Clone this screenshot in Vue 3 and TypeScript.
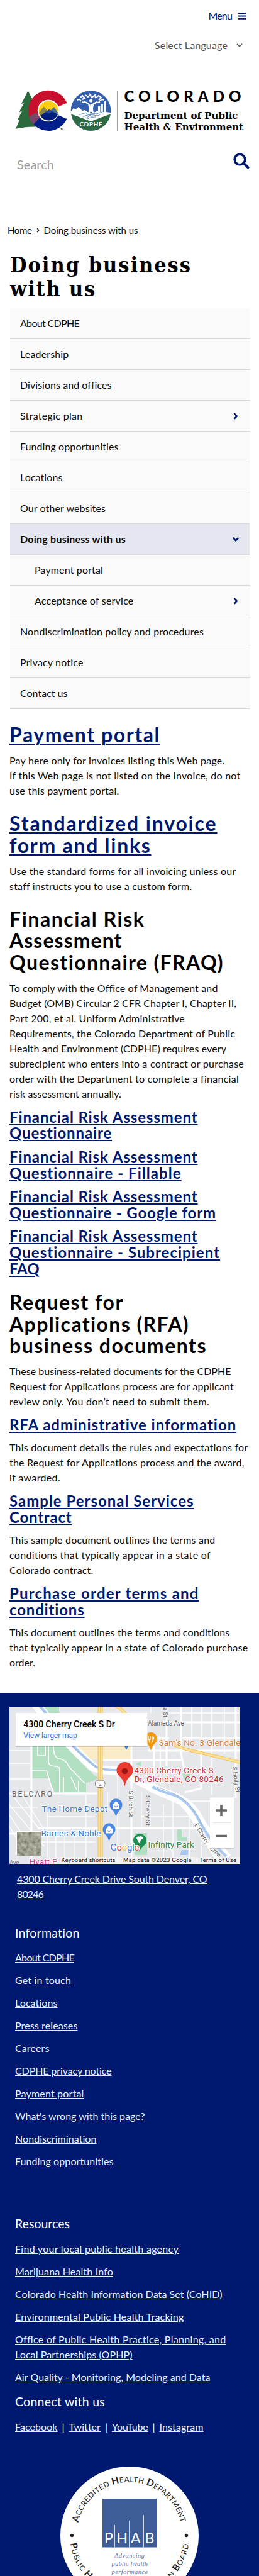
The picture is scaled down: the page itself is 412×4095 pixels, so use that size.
<script setup lang="ts">
import type { Directive } from 'vue'

interface Line {
  text: string
  width: number
}

interface NavItem extends Line {
  level?: 'child'
  active?: boolean
  arrow?: 'right' | 'down'
}

interface Block {
  kind: 'h2' | 'h3' | 'p'
  link?: boolean
  lines: Line[]
}

const line = (text: string, width: number): Line => ({ text, width })

/** Tracks a line of text so that it spans the given measure in pixels. */
const vFit: Directive<HTMLElement, number> = {
  mounted(el, { value }) {
    const count = (el.textContent ?? '').length
    if (!count) return
    const natural = el.getBoundingClientRect().width
    el.style.letterSpacing = `${((value - natural) / count).toFixed(3)}px`
  },
}

const navItems: NavItem[] = [
  { text: 'About CDPHE', width: 94 },
  { text: 'Leadership', width: 77.5 },
  { text: 'Divisions and offices', width: 145.5 },
  { text: 'Strategic plan', width: 99.5, arrow: 'right' },
  { text: 'Funding opportunities', width: 156.5 },
  { text: 'Locations', width: 67.5 },
  { text: 'Our other websites', width: 136 },
  { text: 'Doing business with us', width: 168, active: true, arrow: 'down' },
  { text: 'Payment portal', width: 109, level: 'child' },
  { text: 'Acceptance of service', width: 157.5, level: 'child', arrow: 'right' },
  { text: 'Nondiscrimination policy and procedures', width: 292 },
  { text: 'Privacy notice', width: 100.5 },
  { text: 'Contact us', width: 75.5 },
]

const blocks: Block[] = [
  { kind: 'h2', link: true, lines: [line('Payment portal', 240)] },
  {
    kind: 'p',
    lines: [
      line('Pay here only for invoices listing this Web page.', 342.5),
      line('If this Web page is not listed on the invoice, do not', 367.5),
      line('use this payment portal.', 174.5),
    ],
  },
  { kind: 'h2', link: true, lines: [line('Standardized invoice', 330.5), line('form and links', 225.5)] },
  {
    kind: 'p',
    lines: [
      line('Use the standard forms for all invoicing unless our', 360.5),
      line('staff instructs you to use a custom form.', 290.5),
    ],
  },
  {
    kind: 'h2',
    lines: [line('Financial Risk', 215.5), line('Assessment', 179.5), line('Questionnaire (FRAQ)', 341.5)],
  },
  {
    kind: 'p',
    lines: [
      line('To comply with the Office of Management and', 331.5),
      line('Budget (OMB) Circular 2 CFR Chapter I, Chapter II,', 361),
      line('Part 200, et al. Uniform Administrative', 279),
      line('Requirements, the Colorado Department of Public', 359),
      line('Health and Environment (CDPHE) requires every', 345),
      line('subrecipient who enters into a contract or purchase', 373),
      line('order with the Department to complete a financial', 365),
      line('risk assessment annually.', 178),
    ],
  },
  { kind: 'h3', link: true, lines: [line('Financial Risk Assessment', 299.5), line('Questionnaire', 163.5)] },
  { kind: 'h3', link: true, lines: [line('Financial Risk Assessment', 299.5), line('Questionnaire - Fillable', 274)] },
  { kind: 'h3', link: true, lines: [line('Financial Risk Assessment', 299.5), line('Questionnaire - Google form', 329.5)] },
  {
    kind: 'h3',
    link: true,
    lines: [line('Financial Risk Assessment', 299.5), line('Questionnaire - Subrecipient', 335.5), line('FAQ', 47.5)],
  },
  {
    kind: 'h2',
    lines: [line('Request for', 182), line('Applications (RFA)', 286.5), line('business documents', 314)],
  },
  {
    kind: 'p',
    lines: [
      line('These business-related documents for the CDPHE', 352.5),
      line('Request for Applications process are for applicant', 357),
      line('review only. You don’t need to submit them.', 318),
    ],
  },
  { kind: 'h3', link: true, lines: [line('RFA administrative information', 362)] },
  {
    kind: 'p',
    lines: [
      line('This document details the rules and expectations for', 379.5),
      line('the Request for Applications process and the award,', 373.5),
      line('if awarded.', 81),
    ],
  },
  { kind: 'h3', link: true, lines: [line('Sample Personal Services', 293.5), line('Contract', 99.5)] },
  {
    kind: 'p',
    lines: [
      line('This sample document outlines the terms and', 327.5),
      line('conditions that typically appear in a state of', 320),
      line('Colorado contract.', 133.5),
    ],
  },
  { kind: 'h3', link: true, lines: [line('Purchase order terms and', 301.5), line('conditions', 120)] },
  {
    kind: 'p',
    lines: [
      line('This document outlines the terms and conditions', 350.5),
      line('that typically appear in a state of Colorado purchase', 379.5),
      line('order.', 41),
    ],
  },
]

const address: Line[] = [line('4300 Cherry Creek Drive South Denver, CO', 302.5), line('80246', 42)]

const information: Line[][] = [
  [line('About CDPHE', 94)],
  [line('Get in touch', 89)],
  [line('Locations', 67.5)],
  [line('Press releases', 99.5)],
  [line('Careers', 54.5)],
  [line('CDPHE privacy notice', 153.5)],
  [line('Payment portal', 109.5)],
  [line("What's wrong with this page?", 206.5)],
  [line('Nondiscrimination', 129.5)],
  [line('Funding opportunities', 156.5)],
]

const resources: Line[][] = [
  [line('Find your local public health agency', 260)],
  [line('Marijuana Health Info', 156)],
  [line('Colorado Health Information Data Set (CoHID)', 329.5)],
  [line('Environmental Public Health Tracking', 268.5)],
  [line('Office of Public Health Practice, Planning, and', 335.5), line('Local Partnerships (OPHP)', 186.5)],
  [line('Air Quality - Monitoring, Modeling and Data', 310.5)],
]

const social: Line[] = [line('Facebook', 67.5), line('Twitter', 50.5), line('YouTube', 57.5), line('Instagram', 70)]
</script>

<template>
  <div class="page">
    <header class="header">
      <a class="menu-toggle">
        <span v-fit="37.5" class="line">Menu</span>
        <svg width="12" height="11" viewBox="0 0 12 11"><path d="M0 1.2h12M0 5.5h12M0 9.8h12" stroke="#001970" stroke-width="1.9" /></svg>
      </a>
      <div class="language">
        <span v-fit="116" class="line">Select Language</span>
        <svg width="10" height="6" viewBox="0 0 10 6"><path d="M1 .8l4 4 4-4" fill="none" stroke="#555" stroke-width="1.6" /></svg>
      </div>

      <svg class="logo" width="364" height="66" viewBox="25 143 364 66">
        <path d="M44.500 144.300L51.500 157.500L49.500 157.500L56 170L54 170L60 201.500Q42 201 25 204.800L31 191L27.800 190.500L35 177L30.500 178L38 164L34 165Z" fill="#2a6a3c" />
        <circle cx="77" cy="176" r="24.5" fill="#fff" />
        <path d="M99.600 166.600A24.500 24.500 0 1 0 56.900 190" fill="none" stroke="#c8102e" stroke-width="15" />
        <path d="M99.400 186A24.500 24.500 0 0 1 56.900 190" fill="none" stroke="#001f8a" stroke-width="15" />
        <path d="M46.500 185.500L57 179L63.500 187L53 198Q48 192 46.500 185.500Z" fill="#7a4668" />
        <circle cx="77" cy="176" r="17.200" fill="#fff" />
        <circle cx="77" cy="176" r="15.500" fill="#ffcd11" />
        <path d="M62 179L69.500 169.500L73 173L78 180L70 189Q63 186 62 179Z" fill="#8a8647" />
        <path d="M92 179L86 170L83 173L78 178L86 186Q92 184 92 179Z" fill="#48728e" />
        <path d="M64.500 184L78 174L92 182A15.500 15.500 0 0 1 64.500 184Z" fill="#001f7c" />
        <path d="M69.500 181L78 174.500L87 180L82 178L78 181L74 179Z" fill="#24499e" />
        <text x="96" y="206.500" font-size="4" textLength="5" class="ui">TM</text>

        <defs><clipPath id="seal"><circle cx="144.500" cy="176" r="31.800" /></clipPath></defs>
        <g clip-path="url(#seal)">
          <path d="M112 143h65v66h-65z" fill="#345fac" />
          <path d="M112 178l5-6 3 2 5-4 6 6 4-1 6 4h8l7-3v-7h5v-3h4v-4l4-2v18l7 1v6l-31 14-33-14z" fill="#fff" />
          <path d="M160 167v11M164.500 164v14M169 160v18" stroke="#345fac" stroke-width="1.300" />
          <path d="M112 181l32.500 11 32.500-11v28h-65z" fill="#2b6a42" />
          <path d="M112 179.500l32.500 12.500 32.500-12.500" fill="none" stroke="#fff" stroke-width="1.700" />
          <path d="M126 183q9-5 19-3t18-2M132 186q8-5 17-3t10-1M139 189q6-4 13-3M136 179l14 9M150 179l-13 9" fill="none" stroke="#5a8cd0" stroke-width="1" />
        </g>
        <path d="M141.500 180Q143.500 173 141.500 166Q139 163 134 162M148 180Q145.500 173 148 166Q151 163 155 162M144.700 178V166" fill="none" stroke="#fff" stroke-width="2.600" />
        <circle cx="144.700" cy="160" r="2.600" fill="#fff" />
        <path d="M122 159l5-1 2 3M128 155l3-3 4 4-4 2M136 151l4 3 3-3 3 4 5-4 1 5M153 155l4-3 4 3-4 4M158 161l4-3 4 1M130 162l4 1M155 163l4-1M142 149l3 3" fill="none" stroke="#fff" stroke-width="2" />
        <text x="126.500" y="201" font-size="10.200" font-weight="700" fill="#fff" textLength="36" class="ui">CDPHE</text>

        <path d="M186.800 144v64" stroke="#777" />
        <text x="197.500" y="162" font-size="24" font-weight="900" textLength="186" class="ui">COLORADO</text>
        <text x="197.500" y="189" font-size="15.500" font-weight="700" textLength="181" lengthAdjust="spacingAndGlyphs" class="slab">Department of Public</text>
        <text x="197.500" y="207" font-size="15.500" font-weight="700" textLength="189.500" lengthAdjust="spacingAndGlyphs" class="slab">Health &amp; Environment</text>
      </svg>

      <div class="search">
        <span v-fit="59" class="line">Search</span>
        <svg width="26" height="26" viewBox="0 0 26 26">
          <circle cx="10.500" cy="10.500" r="8.300" fill="none" stroke="#001970" stroke-width="3.600" />
          <path d="M16.500 16.500l7 6.800" stroke="#001970" stroke-width="4" stroke-linecap="round" />
        </svg>
      </div>
    </header>

    <nav class="crumbs">
      <a v-fit="38.5" class="line">Home</a>
      <svg width="5" height="8" viewBox="0 0 5 8"><path d="M1 1l2.800 3L1 7" fill="none" stroke="#222" stroke-width="1.300" /></svg>
      <span v-fit="150" class="line">Doing business with us</span>
    </nav>

    <h1 class="title">
      <span v-fit="289" class="line">Doing business</span>
      <span v-fit="137" class="line">with us</span>
    </h1>

    <ul class="side-nav">
      <li v-for="item in navItems" :key="item.text" :class="[item.level, { active: item.active }]">
        <span v-fit="item.width" class="line">{{ item.text }}</span>
        <svg v-if="item.arrow" :class="item.arrow" width="8" height="11" viewBox="0 0 8 11">
          <path d="M1.500 1.200l4.200 4.300-4.200 4.300" fill="none" stroke="#001970" stroke-width="2.500" />
        </svg>
      </li>
    </ul>

    <main class="content">
      <component :is="block.kind" v-for="(block, i) in blocks" :key="i" :class="{ link: block.link }">
        <span v-for="row in block.lines" :key="row.text" v-fit="row.width" class="line">{{ row.text }}</span>
      </component>
    </main>

    <footer class="footer">
      <svg class="map" width="367" height="250" viewBox="0 0 367 250">
        <defs>
          <filter id="aerial" x="0" y="0" width="1" height="1">
            <feTurbulence type="fractalNoise" baseFrequency=".16" numOctaves="3" seed="4" />
            <feColorMatrix values=".6 0 0 0 .05  .6 0 0 0 .05  .5 0 0 0 .03  0 0 0 0 1" />
          </filter>
        </defs>
        <path d="M0 0h367v250H0z" fill="#e6e7ea" />
        <path d="M100 55h94v29h-72z" fill="#fbecc8" />
        <path d="M57 0h22v10H57zM35 62h53l17 16 20 22 15 13-7 6-11 2v15H72L62 114H35zM199 201h20v35h-20zM267 195h7v12h8v6h-15z" fill="#b3dfc2" />
        <path d="M200 91l10-4v8zM275 106h12v14l-9-4z" fill="#b3dfc2" />
        <g fill="none" stroke="#fff">
          <path d="M45 62v16h12V62M62 62v26q0 6 12 7 5 0 6 5v36M70 62q0 20 10 21t15 13l25 26M98 112l9 20M35 102h24l10 33M86 112v24M110 118v17" stroke-width="1.700" />
          <path d="M0 138h140M147 85h128M220 25h147M0 202h55M45 193h275M35 62v188M194 62v188M230 62v65M250 0v95M273 0v75l6 30M360 0v145M305 70v60l-26 6M220 70h147M194 50h60" stroke-width="3" />
          <path d="M8 145l40 50M0 156l55 66M0 172l30 45M0 190l20 35M20 140l35 55M60 155v95M74 196v54M88 196v54M104 196v45M122 140v100M156 135v30M172 110v140M210 135v60M224 145v50M245 155v90M260 150v100M286 175v75M305 190v60M0 70h35M0 90h35M0 115h35M147 105h35M232 105h70M240 55v70M290 0v60M306 0v60M322 0v140M342 0v75M0 160h45M50 215h86M60 175h76M210 175h80M280 150h40M225 0v10M245 10h120M275 50h92" stroke-width="1.300" />
          <path d="M34-8Q62 25 92 60Q112 82 132 99Q146 104 171 105Q205 119 228 133L272 152Q292 170 307 205L331 240" stroke-width="8" />
          <path d="M47-5Q75 32 104 63Q123 83 136 94Q150 99 172 98M220 121Q238 131 260 138Q290 150 303 174Q326 215 350 238" stroke="#fff" stroke-width="7" />
          <path d="M46-5Q75 32 102 63Q122 84 138 96Q150 101 171 101M227 128Q242 135 263 141Q284 150 298 174Q318 213 345 238" stroke="#a9c8f1" stroke-width="4" />
          <path d="M45-3Q75 34 104 67L138 97M228 126Q264 136 283 152Q300 171 307 190" stroke="#8ca9bc" stroke-width=".7" />
        </g>
        <path d="M167-3q10 5 20 17M258 59q20 9 41 13l70 17" fill="none" stroke="#f3bf58" stroke-width="5" />
        <path d="M167-3q10 5 20 17M258 59q20 9 41 13l70 17" fill="none" stroke="#fde194" stroke-width="3.200" />
        <path d="M144.500 0v250" stroke="#f1bf5c" stroke-width="8" />
        <path d="M144.500 0v250" stroke="#fee095" stroke-width="6" />
        <path d="M144.500 0v250" stroke="#f5cb6c" />
        <path d="M274 228h10v8h-13z" fill="#a9c8f1" />
        <rect x="136.500" y="117" width="15.500" height="11.500" rx="5" fill="#fff" stroke="#777" />
        <g class="gmap">
          <text x="142" y="126" font-size="8" fill="#555">2</text>
          <text x="220" y="30.300" font-size="10.500" fill="#666" textLength="58">Alameda Ave</text>
          <text x="4" y="142.500" font-size="12" fill="#606468" textLength="64">BELCARO</text>
          <g font-size="9.500" fill="#666">
            <text transform="translate(190 133.500) rotate(90)" textLength="42">S Birch St</text>
            <text transform="translate(217 141) rotate(90)" textLength="48">S Cherry St</text>
            <text transform="translate(355 96) rotate(83)" textLength="41">S Holly St</text>
            <text transform="translate(245 1) rotate(90)" textLength="16">a St</text>
            <text transform="translate(294 188) rotate(59)" textLength="36">E Cherry</text>
            <text transform="translate(318 226) rotate(42)" textLength="20">Cree</text>
            <text x="0" y="251">Ave</text>
          </g>
          <text x="237.500" y="62" font-size="13.500" textLength="130" class="poi orange">Sam's No. 3 Glendale</text>
          <text x="198.500" y="105.500" font-size="13.500" textLength="126" class="poi red">4300 Cherry Creek S</text>
          <text x="198.500" y="119.500" font-size="13.500" textLength="142" class="poi red">Dr, Glendale, CO 80246</text>
          <text x="51.500" y="166.500" font-size="13.500" textLength="104.500" class="poi blue">The Home Depot</text>
          <text x="50.500" y="205.500" font-size="13.500" textLength="95" class="poi blue">Barnes &amp; Noble</text>
          <text x="31.500" y="251" font-size="13.500" textLength="45" class="poi pink">Hyatt P</text>
          <path d="M225 70q-2-8-7-12a10 10 0 1 1 14 0q-5 4-7 12z" fill="#f29b0c" />
          <path d="M221 47v5h3v-5M222.500 52v5M228 47v10M228 47q3 3 0 6" fill="none" stroke="#fff" stroke-width="1.300" />
          <path d="M183.500 126.500q-2-11-9-16a13 13 0 1 1 18 0q-7 5-9 16z" fill="#ea3a30" />
          <circle cx="183.500" cy="102.500" r="4.800" fill="#9c1512" />
          <path d="M169.500 175.500q-2-8-7-12a10 10 0 1 1 14 0q-5 4-7 12z" fill="#4a86e0" />
          <path d="M164.500 155h10v7h-10zM167.500 155v-2a2 2 0 0 1 4 0v2" fill="#fff" stroke="#fff" />
          <path d="M167.500 157.500a2 2 0 0 0 4 0" fill="none" stroke="#4a86e0" />
          <path d="M158.500 214.500q-2-8-7-12a10 10 0 1 1 14 0q-5 4-7 12z" fill="#4a86e0" />
          <path d="M153.500 194h10v7h-10zM156.500 194v-2a2 2 0 0 1 4 0v2" fill="#fff" stroke="#fff" />
          <path d="M156.500 196.500a2 2 0 0 0 4 0" fill="none" stroke="#4a86e0" />
          <path d="M207 231q-2-8-7-11a10.500 10.500 0 1 1 15 0q-6 4-8 11z" fill="#1c8e52" />
          <path d="M202 209a3 3 0 0 1 5-2 3 3 0 0 1 5 3l-3 2-2 6-3-5z" fill="#fff" />
          <text x="220.500" y="223.500" font-size="13.500" textLength="73" class="poi green">Infinity Park</text>
          <text x="160.500" y="228.500" font-size="15" textLength="46" class="poi"><tspan fill="#4a80e8">G</tspan><tspan fill="#dd5048">o</tspan><tspan fill="#efb93b">o</tspan><tspan fill="#4a80e8">g</tspan><tspan fill="#3ba35b">l</tspan><tspan fill="#dd5048">e</tspan></text>
          <path d="M183 63h6l-3 6z" fill="#4a86e0" />
          <path d="M80 239h287v11H80z" fill="#f4f4f4" opacity=".75" />
          <g font-size="9.600" fill="#111">
            <text x="82.500" y="246.800" textLength="86">Keyboard shortcuts</text>
            <text x="181" y="246.800" textLength="108.500">Map data ©2023 Google</text>
            <text x="302" y="246.800" textLength="59">Terms of Use</text>
          </g>
          <path d="M10 11h209.500v53H10z" fill="#000" opacity=".15" />
          <path d="M10 10h209.500v52.500H10z" fill="#fff" />
          <text x="22.300" y="32.500" font-size="14" font-weight="500" textLength="145.500">4300 Cherry Creek S Dr</text>
          <text x="22.300" y="50.300" font-size="12" fill="#2f74d8" textLength="85.500">View larger map</text>
        </g>
        <path d="M319 145h38.500v81H319z" fill="#000" opacity=".12" />
        <path d="M319 144.500h38v80h-38z" fill="#fff" />
        <path d="M323 184.500h30" stroke="#e6e6e6" />
        <path d="M328 165h18M337 156v18M328 205.500h18" stroke="#666" stroke-width="3.600" />
        <path d="M11 198h39.500v39.500H11z" fill="#fff" />
        <path d="M12 199h37.500v37.500H12z" filter="url(#aerial)" />
      </svg>

      <a class="address">
        <span v-for="row in address" :key="row.text" v-fit="row.width" class="line">{{ row.text }}</span>
      </a>

      <section class="links information">
        <h4><span v-fit="103" class="line">Information</span></h4>
        <a v-for="item in information" :key="item[0].text">
          <span v-for="row in item" :key="row.text" v-fit="row.width" class="line">{{ row.text }}</span>
        </a>
      </section>

      <section class="links resources">
        <h4><span v-fit="87" class="line">Resources</span></h4>
        <a v-for="item in resources" :key="item[0].text">
          <span v-for="row in item" :key="row.text" v-fit="row.width" class="line">{{ row.text }}</span>
        </a>
      </section>

      <section class="links connect">
        <h4><span v-fit="143" class="line">Connect with us</span></h4>
        <div class="social">
          <template v-for="(item, i) in social" :key="item.text">
            <span v-if="i" class="bar">|</span>
            <a><span v-fit="item.width" class="line">{{ item.text }}</span></a>
          </template>
        </div>
      </section>

      <svg class="badge" width="220" height="174" viewBox="0 0 220 174">
        <defs>
          <path id="arc-top" d="M28.300 89.100A84 84 0 0 1 191.700 89.100" />
          <path id="arc-bottom" d="M15.800 122.400A95 95 0 0 0 204.200 122.400" />
        </defs>
        <circle cx="110" cy="110" r="110" fill="#fff" />
        <g class="ring" font-size="11.800">
          <text textLength="224"><textPath href="#arc-top"><tspan class="cap">A</tspan>CCREDITED <tspan class="cap">H</tspan>EALTH <tspan class="cap">D</tspan>EPARTMENT</textPath></text>
          <text textLength="272"><textPath href="#arc-bottom"><tspan class="cap">P</tspan>UBLIC <tspan class="cap">H</tspan>EALTH <tspan class="cap">A</tspan>CCREDITATION <tspan class="cap">B</tspan>OARD</textPath></text>
        </g>
        <circle cx="18.500" cy="109.500" r="2.700" fill="#222" />
        <circle cx="200.500" cy="109.500" r="2.700" fill="#222" />
        <path d="M67 51h86v77.500H67z" fill="#3d5c98" />
        <path d="M86.500 93v35M109.500 86v42M132.500 77v51" stroke="#cdd8ec" />
        <g font-size="23" fill="#fff" class="ui">
          <text x="70" y="121.500">P</text><text x="89.500" y="121.500">H</text><text x="112" y="121.500">A</text><text x="134.500" y="121.500">B</text>
        </g>
        <g class="motto" font-size="10.500">
          <text x="86" y="144.500" textLength="48">Advancing</text>
          <text x="81.500" y="157.500" textLength="57.500">public health</text>
          <text x="81.500" y="170.500" textLength="57.500">performance</text>
        </g>
      </svg>
    </footer>
  </div>
</template>

<style>
body {
  background: #fff;
}
</style>

<style scoped>
.page {
  width: 412px;
  height: 4095px;
  overflow: hidden;
  color: #0b0b0b;
  font: 16px/24px Lato, "Open Sans", sans-serif;
  font-kerning: normal;
  font-variant-ligatures: none;
}
.line {
  display: block;
  width: fit-content;
  white-space: nowrap;
}
h1, h2, h3, h4, p, ul {
  margin: 0;
  padding: 0;
}
.header {
  display: flex;
  flex-direction: column;
  height: 354px;
}
.menu-toggle {
  display: flex;
  align-items: center;
  justify-content: flex-end;
  gap: 10px;
  padding: 13px 21px 0 0;
  color: #001970;
}
.language {
  display: flex;
  align-items: center;
  justify-content: flex-end;
  gap: 14px;
  padding: 23px 26px 0 0;
  color: #555;
}
.logo {
  display: block;
  overflow: visible;
  margin: 59px 0 0 25px;
}
.ui {
  font-family: Lato, sans-serif;
}
.slab {
  font-family: "DejaVu Serif Condensed", "DejaVu Serif", serif;
}
.search {
  display: flex;
  justify-content: space-between;
  padding: 34px 15px 0 27px;
  color: #9b9b9b;
  font-size: 20px;
}
.search .line {
  margin-top: 6px;
}
.crumbs {
  display: flex;
  align-items: center;
  gap: 7px;
  height: 24px;
  padding-left: 12px;
  font-size: 15px;
}
.crumbs a {
  text-decoration: underline;
}
.title {
  height: 88px;
  padding: 24px 0 0 16px;
  color: #000;
  font: 700 34px/38.4px "DejaVu Serif Condensed", "DejaVu Serif", serif;
}
.side-nav {
  margin: 0 15px 0 16px;
  list-style: none;
}
.side-nav li {
  display: flex;
  align-items: center;
  justify-content: space-between;
  height: 48px;
  padding: 0 18px 0 16px;
  border-bottom: 1px solid #d9d9db;
  background: #fafafa;
}
.side-nav li.child {
  padding-left: 39px;
}
.side-nav li.active {
  background: #e4e7ef;
  font-weight: 700;
}
.side-nav .down {
  transform: rotate(90deg);
}
.content {
  height: 1541px;
  margin-left: 15px;
  padding-top: 23.7px;
}
.content h2 {
  margin: 23.5px 0 11.7px;
  color: #000;
  font: 700 32px/34.35px Lato, sans-serif;
}
.content h2:first-child {
  margin-top: 0;
}
.content h3 {
  margin: 11.7px 0;
  font: 700 24px/25.8px Lato, sans-serif;
}
.content .link {
  color: #001970;
}
.link .line {
  text-decoration: underline;
  text-decoration-thickness: 2px;
  text-underline-offset: 2px;
}
.footer {
  height: 1404px;
  background: #001970;
  color: #fff;
}
.map {
  display: block;
  margin-left: 15px;
  padding-top: 21px;
}
.gmap {
  font-family: Roboto, sans-serif;
}
.poi {
  stroke: #fff;
  stroke-width: 2px;
  paint-order: stroke;
}
.orange { fill: #d98234; }
.red { fill: #c5313a; }
.blue { fill: #3b79cf; }
.pink { fill: #dd3f80; }
.green { fill: #2c8a4b; }
.address {
  display: block;
  margin: 12.4px 0 0 27px;
}
.address .line,
.links a .line {
  color: #eaf2ff;
  text-decoration: underline;
}
.links {
  padding-left: 24px;
}
.links h4 {
  margin-bottom: 13px;
  font: 400 19.5px/30px Lato, sans-serif;
}
.links a {
  display: block;
  margin-bottom: 12px;
}
.information {
  padding-top: 35px;
}
.information h4 {
  margin-bottom: 12.4px;
}
.resources {
  padding-top: 59.9px;
}
.social {
  display: flex;
}
.social .bar {
  width: 18px;
  text-align: center;
}
.badge {
  display: block;
  margin: 39px 0 0 96px;
}
.ring {
  font-family: Lato, sans-serif;
  fill: #222;
}
.cap {
  font-size: 15px;
  font-weight: 700;
}
.motto {
  font-family: "Liberation Serif", serif;
  font-style: italic;
  fill: #6474a8;
}
</style>
